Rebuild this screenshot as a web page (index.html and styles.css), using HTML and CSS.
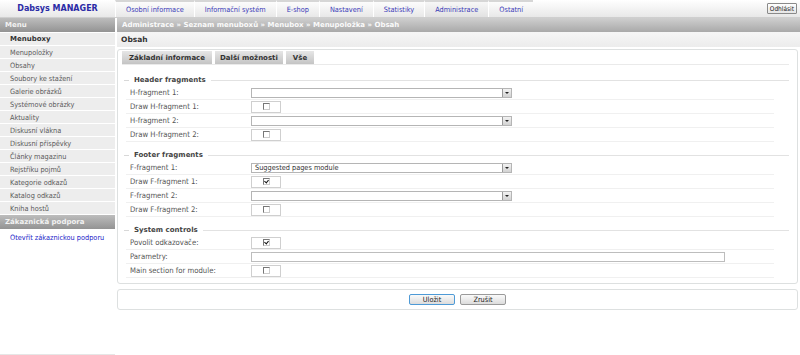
FILE: index.html
```html
<!DOCTYPE html>
<html lang="cs">
<head>
  <meta charset="UTF-8">
  <title>Dabsys MANAGER</title>
  <link rel="stylesheet" href="styles.css">
</head>
<body>
  <header class="topbar">
    <div class="brand">Dabsys MANAGER</div>
    <nav class="mainnav">
      <a href="#">Osobní informace</a>
      <a href="#">Informační systém</a>
      <a href="#">E-shop</a>
      <a href="#">Nastavení</a>
      <a href="#">Statistiky</a>
      <a href="#" class="active">Administrace</a>
      <a href="#">Ostatní</a>
    </nav>
    <button class="logout">Odhlásit</button>
  </header>

  <div class="layout">
    <aside class="sidebar">
      <div class="side-head">Menu</div>
      <ul class="side-menu">
        <li class="current">Menuboxy</li>
        <li>Menupoložky</li>
        <li>Obsahy</li>
        <li>Soubory ke stažení</li>
        <li>Galerie obrázků</li>
        <li>Systémové obrázky</li>
        <li>Aktuality</li>
        <li>Diskusní vlákna</li>
        <li>Diskusní příspěvky</li>
        <li>Články magazinu</li>
        <li>Rejstříku pojmů</li>
        <li>Kategorie odkazů</li>
        <li>Katalog odkazů</li>
        <li>Kniha hostů</li>
      </ul>
      <div class="side-head">Zákaznická podpora</div>
      <ul class="side-links">
        <li><a href="#">Otevřít zákaznickou podporu</a></li>
      </ul>
    </aside>

    <main class="content">
      <div class="crumbs">Administrace » Seznam menuboxů » Menubox » Menupoložka » Obsah</div>
      <h1 class="page-title">Obsah</h1>

      <div class="panel form-panel">
        <div class="tabs">
          <span class="tab">Základní informace</span>
          <span class="tab">Další možnosti</span>
          <span class="tab">Vše</span>
        </div>

        <section class="group">
          <div class="group-title">Header fragments</div>
          <div class="row">
            <label>H-fragment 1:</label>
            <div class="select"><span></span><i class="arrow"></i></div>
          </div>
          <div class="row">
            <label>Draw H-fragment 1:</label>
            <div class="checkwrap"><span class="check"></span></div>
          </div>
          <div class="row">
            <label>H-fragment 2:</label>
            <div class="select"><span></span><i class="arrow"></i></div>
          </div>
          <div class="row">
            <label>Draw H-fragment 2:</label>
            <div class="checkwrap"><span class="check"></span></div>
          </div>
        </section>

        <section class="group">
          <div class="group-title">Footer fragments</div>
          <div class="row">
            <label>F-fragment 1:</label>
            <div class="select"><span>Suggested pages module</span><i class="arrow"></i></div>
          </div>
          <div class="row">
            <label>Draw F-fragment 1:</label>
            <div class="checkwrap"><span class="check checked"></span></div>
          </div>
          <div class="row">
            <label>F-fragment 2:</label>
            <div class="select"><span></span><i class="arrow"></i></div>
          </div>
          <div class="row">
            <label>Draw F-fragment 2:</label>
            <div class="checkwrap"><span class="check"></span></div>
          </div>
        </section>

        <section class="group">
          <div class="group-title">System controls</div>
          <div class="row">
            <label>Povolit odkazovače:</label>
            <div class="checkwrap"><span class="check checked"></span></div>
          </div>
          <div class="row">
            <label>Parametry:</label>
            <div class="textbox"></div>
          </div>
          <div class="row">
            <label>Main section for module:</label>
            <div class="checkwrap"><span class="check"></span></div>
          </div>
        </section>
      </div>

      <div class="panel actions">
        <button class="btn focus">Uložit</button>
        <button class="btn">Zrušit</button>
      </div>
    </main>
  </div>
</body>
</html>
```

FILE: styles.css
```css
* { box-sizing: border-box; }
body { margin: 0; font-family: "DejaVu Sans Condensed", "DejaVu Sans", Tahoma, sans-serif; font-size: 7.3px; color: #444; background: #fff; }
ul { list-style: none; margin: 0; padding: 0; }
a { text-decoration: none; }

/* top bar */
.topbar { display: flex; align-items: stretch; height: 18px; background: linear-gradient(#ffffff, #e8e8e8); border-bottom: 1px solid #cfcfcf; }
.brand { width: 115px; display: flex; align-items: center; justify-content: center; font-family: "DejaVu Sans", sans-serif; font-weight: bold; font-size: 8px; color: #2b2ba6; }
.mainnav { display: flex; flex: 1; }
.mainnav a { display: flex; align-items: center; padding: 0 10px; color: #3a3ab8; border-top: 2px solid #d6d6d6; border-left: 1px solid #fff; }
.mainnav a.active { background: linear-gradient(#f7f7f7, #e2e2e2); }
.logout { align-self: center; margin-right: 3px; height: 11px; padding: 0 2px; font: inherit; font-size: 6.5px; color: #222; background: linear-gradient(#fff, #e6e6e6); border: 1px solid #8a8a8a; border-radius: 1px; }

/* layout */
.layout { display: grid; grid-template-columns: 115px 1fr; column-gap: 2px; }

.sidebar { min-height: 337px; border-bottom: 1px solid #e6e6e6; }
.side-head { height: 14px; display: flex; align-items: center; padding-left: 5px; font-family: "DejaVu Sans", sans-serif; font-size: 7px; font-weight: bold; color: #f2f2f2; background: linear-gradient(#bdbdbd, #939393); }
.side-menu { padding-top: 1px; }
.side-menu li { height: 13px; display: flex; align-items: center; padding-left: 10px; background: #ededed; border-bottom: 1px solid #fff; color: #5a5a5a; }
.side-menu li.current { font-family: "DejaVu Sans", sans-serif; font-size: 7px; font-weight: bold; color: #333; }
.side-links li { height: 14px; display: flex; align-items: center; padding-left: 10px; margin-top: 1px; }
.side-links a { color: #2323c8; }

.content { padding-right: 2px; }
.crumbs { height: 14px; display: flex; align-items: center; padding-left: 5px; margin-right: -2px; font-family: "DejaVu Sans", sans-serif; font-size: 7px; font-weight: bold; color: #fafafa; background: linear-gradient(#cfcfcf, #a9a9a9); }
.page-title { margin: 0 -2px 0 0; height: 15px; display: flex; align-items: center; padding-left: 4px; font-family: "DejaVu Sans", sans-serif; font-size: 7.5px; font-weight: bold; color: #333; background: linear-gradient(#f6f6f6, #ececec); }

.panel { border: 1px solid #dde0e0; border-radius: 3px; background: #fff; }
.form-panel { margin-top: 2px; padding: 1px 8px 5px 4px; }

.tabs { display: flex; gap: 3px; border-bottom: 1px solid #eaeaea; }
.tab { height: 13px; display: flex; align-items: center; padding: 0 5px; font-family: "DejaVu Sans", sans-serif; font-size: 7px; font-weight: bold; color: #333; background: linear-gradient(#e6e6e6, #c4c4c4); }
.tab:first-child { padding: 0 7px; }
.tab:last-child { padding: 0 7px; }

.group { margin-top: 9px; }
.group + .group { margin-top: 7px; }
.group-title { height: 12px; display: flex; align-items: center; gap: 5px; font-family: "DejaVu Sans", sans-serif; font-size: 7px; font-weight: bold; color: #444; padding-left: 2px; }
.group-title::before { content: ""; width: 5px; height: 1px; background: #d8d8d8; }
.group-title::after { content: ""; flex: 1; height: 1px; background: #e2e2e2; }

.row { display: grid; grid-template-columns: 121px 1fr; align-items: center; height: 14px; margin: 0 15px 0 4px; padding-left: 4px; border-bottom: 1px solid #f0f0f0; }
.row label { color: #555; font-size: 7.7px; }

.select { position: relative; width: 261px; height: 10px; border: 1px solid #b5b5b5; background: #fff; display: flex; align-items: center; padding-left: 3px; color: #333; }
.select .arrow { position: absolute; right: 0; top: 0; bottom: 0; width: 9px; background: linear-gradient(#f2f2f2, #d2d2d2); border-left: 1px solid #9a9a9a; }
.select .arrow::after { content: ""; position: absolute; left: 2px; top: 3px; border-left: 2px solid transparent; border-right: 2px solid transparent; border-top: 2px solid #222; }

.checkwrap { width: 30px; height: 12px; border: 1px solid #cfcfcf; display: flex; align-items: center; justify-content: center; }
.check { position: relative; width: 7px; height: 7px; border: 1px solid #777; border-right-color: #ccc; border-bottom-color: #ccc; background: #fff; }
.check.checked::after { content: ""; position: absolute; left: 1px; top: 0; width: 2px; height: 3px; border-right: 1.5px solid #111; border-bottom: 1.5px solid #111; transform: rotate(40deg); }

.textbox { width: 474px; height: 10px; border: 1px solid #bdbdbd; }

.actions { margin-top: 5px; height: 21px; display: flex; align-items: center; justify-content: center; gap: 5px; }
.btn { width: 46px; height: 11px; padding: 0; font: inherit; color: #222; background: linear-gradient(#fafafa, #dcdcdc); border: 1px solid #9a9a9a; border-radius: 2px; }
.btn.focus { border-color: #4e9ad6; }
```
